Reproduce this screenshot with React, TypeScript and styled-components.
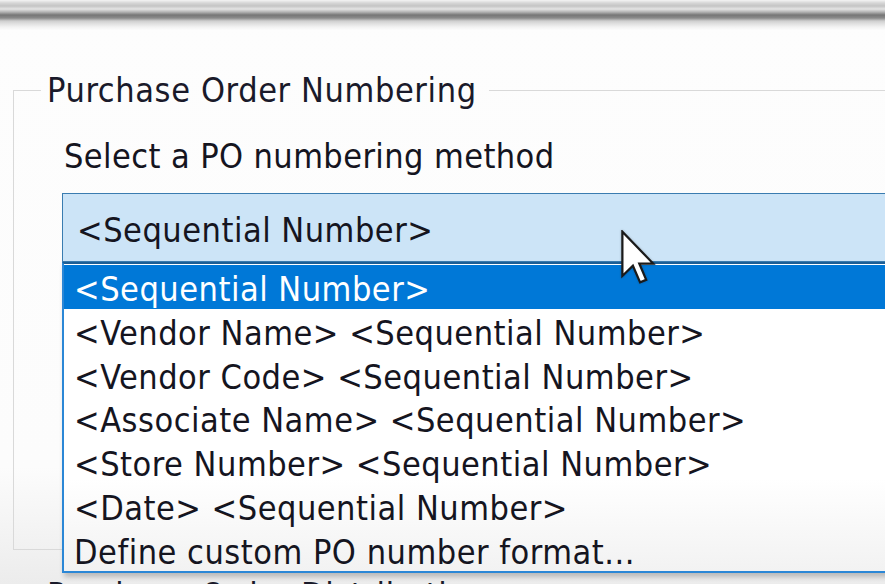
import { createGlobalStyle } from "styled-components";
import styled from "styled-components";

const GlobalStyle = createGlobalStyle`
  html, body {
    margin: 0;
    padding: 0;
    overflow: hidden;
  }
  body {
    font-family: "DejaVu Sans Condensed", "DejaVu Sans", sans-serif;
    color: #15151f;
  }
`;

const Page = styled.div`
  position: relative;
  width: 885px;
  height: 584px;
  overflow: hidden;
  display: flex;
  flex-direction: column;
  background: linear-gradient(
    to bottom,
    #fdfdfd 0%,
    #fcfcfc 80%,
    #ececec 100%
  );
`;

// window frame edge at the very top
const FrameEdge = styled.div`
  flex: none;
  height: 30px;
  background: linear-gradient(
    to bottom,
    #f4f4f4 0px,
    #d6d6d6 3px,
    #c4c4c4 6px,
    #e4e4e4 9px,
    #b4b4b4 12px,
    #767676 15px,
    #8a8a8a 18px,
    #cfcfcf 21px,
    #e2e2e2 24px,
    #f2f2f2 27px,
    #fcfcfc 30px
  );
`;

const Body = styled.div`
  padding-left: 13px;
  display: flex;
  flex-direction: column;
`;

const Group = styled.fieldset<{ $height?: number; $top: number }>`
  margin: ${(p) => p.$top}px 0 0 0;
  padding: 0;
  width: 940px;
  height: ${(p) => (p.$height ? `${p.$height}px` : "auto")};
  box-sizing: border-box;
  border: 1px solid #d9d9d9;
  min-inline-size: 0;
`;

const Legend = styled.legend`
  margin-left: 27px;
  padding: 0 12px 0 6px;
  font-size: 34px;
  letter-spacing: 0.6px;
  line-height: 37px;
  color: #1a1a2a;
`;

const Content = styled.div`
  padding-left: 48px;
  display: flex;
  flex-direction: column;
`;

const Label = styled.div`
  margin-top: 27px;
  padding-left: 2px;
  font-size: 34px;
  letter-spacing: 0.4px;
  line-height: 40px;
`;

const ComboArea = styled.div`
  position: relative;
  margin-top: 17px;
`;

const Combo = styled.div`
  height: 69px;
  box-sizing: border-box;
  border: 1px solid #3a7cb0;
  background: #cce4f7;
  display: flex;
  align-items: center;
  padding: 4px 0 0 14px;
  font-size: 34px;
  letter-spacing: 0.5px;
`;

const DropList = styled.ul`
  position: absolute;
  left: 0;
  top: 69px;
  width: 900px;
  height: 311px;
  margin: 0;
  padding: 1px 0 0 0;
  list-style: none;
  box-sizing: border-box;
  border: 2px solid #2b87d6;
  border-top-color: #1d5f96;
  background: linear-gradient(to bottom, #ffffff 70%, #f2f2f2 100%);
  box-shadow: 2px 4px 5px rgba(0, 0, 0, 0.22);
  display: flex;
  flex-direction: column;
`;

const Option = styled.li<{ $active?: boolean }>`
  height: 43.8px;
  flex: none;
  box-sizing: border-box;
  display: flex;
  align-items: center;
  padding: 4px 0 0 10px;
  font-size: 34px;
  letter-spacing: 0.5px;
  white-space: nowrap;
  background: ${(p) => (p.$active ? "#0078d7" : "transparent")};
  color: ${(p) => (p.$active ? "#ffffff" : "#15151f")};
`;

const Pointer = styled.svg`
  position: absolute;
  left: 621px;
  top: 230px;
  filter: drop-shadow(0 0 1px rgba(0, 0, 0, 0.25));
`;

const options = [
  "<Sequential Number>",
  "<Vendor Name> <Sequential Number>",
  "<Vendor Code> <Sequential Number>",
  "<Associate Name> <Sequential Number>",
  "<Store Number> <Sequential Number>",
  "<Date> <Sequential Number>",
  "Define custom PO number format...",
];

export default function App() {
  return (
    <Page>
      <GlobalStyle />
      <FrameEdge />
      <Body>
        <Group $top={42} $height={478}>
          <Legend>Purchase Order Numbering</Legend>
          <Content>
            <Label>Select a PO numbering method</Label>
            <ComboArea>
              <Combo>{options[0]}</Combo>
              <DropList>
                {options.map((o, i) => (
                  <Option key={o} $active={i === 0}>
                    {o}
                  </Option>
                ))}
              </DropList>
            </ComboArea>
          </Content>
        </Group>
        <Group $top={27}>
          <Legend>Purchase Order Distribution</Legend>
        </Group>
      </Body>

      <Pointer width="36" height="56" viewBox="0 0 13 20">
        <path
          d="M0.5 0.5 L0.5 16.5 L4.3 12.8 L6.9 18.8 L9.1 17.9 L6.6 12 L11.6 12 Z"
          fill="#ffffff"
          stroke="#1a1a1a"
          strokeWidth="0.8"
          strokeLinejoin="miter"
        />
      </Pointer>
    </Page>
  );
}
